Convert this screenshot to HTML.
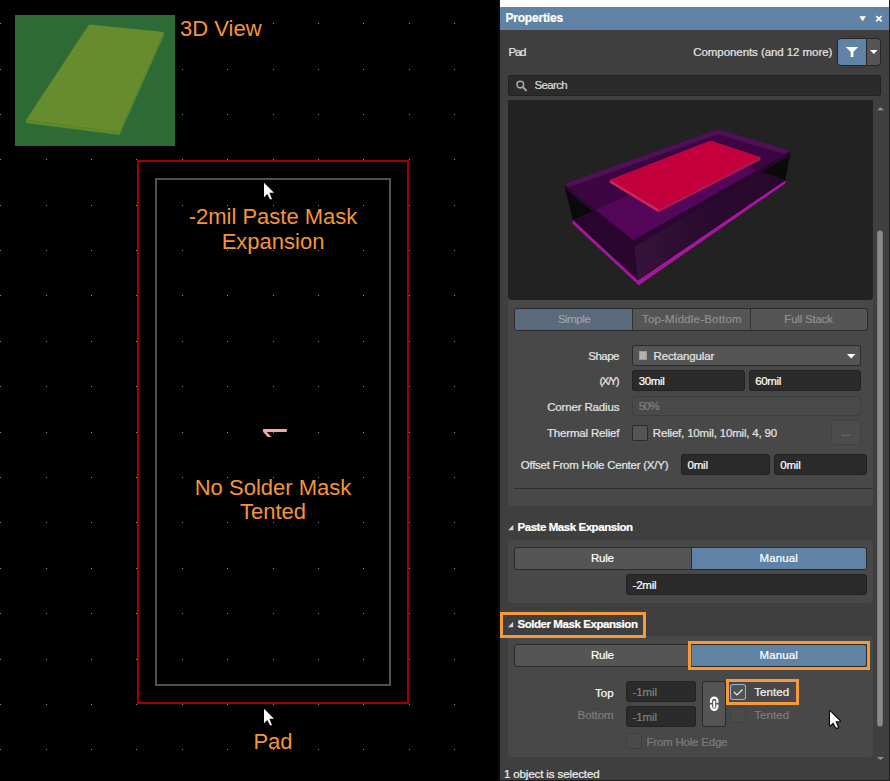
<!DOCTYPE html>
<html><head><meta charset="utf-8"><title>Properties</title>
<style>
html,body{margin:0;padding:0;background:#000;}
body{width:890px;height:781px;position:relative;overflow:hidden;font-family:"Liberation Sans",sans-serif;font-size:11.5px;}
.t{position:absolute;white-space:nowrap;line-height:14px;display:block;-webkit-text-stroke:0.22px}
.b{position:absolute;box-sizing:border-box}
.o{position:absolute;white-space:nowrap;color:#f5953a;font-size:22px;line-height:25px;text-align:center;display:block}
svg{position:absolute;left:0;top:0}
</style></head><body>

<svg width="500" height="781" viewBox="0 0 500 781">
<path d="M0 23h1v1h-1zM0 69h1v1h-1zM0 114h1v1h-1zM0 159h1v1h-1zM0 205h1v1h-1zM0 250h1v1h-1zM0 295h1v1h-1zM0 341h1v1h-1zM0 386h1v1h-1zM0 432h1v1h-1zM0 477h1v1h-1zM0 522h1v1h-1zM0 568h1v1h-1zM0 613h1v1h-1zM0 659h1v1h-1zM0 704h1v1h-1zM0 749h1v1h-1zM46 23h1v1h-1zM46 69h1v1h-1zM46 114h1v1h-1zM46 159h1v1h-1zM46 205h1v1h-1zM46 250h1v1h-1zM46 295h1v1h-1zM46 341h1v1h-1zM46 386h1v1h-1zM46 432h1v1h-1zM46 477h1v1h-1zM46 522h1v1h-1zM46 568h1v1h-1zM46 613h1v1h-1zM46 659h1v1h-1zM46 704h1v1h-1zM46 749h1v1h-1zM91 23h1v1h-1zM91 69h1v1h-1zM91 114h1v1h-1zM91 159h1v1h-1zM91 205h1v1h-1zM91 250h1v1h-1zM91 295h1v1h-1zM91 341h1v1h-1zM91 386h1v1h-1zM91 432h1v1h-1zM91 477h1v1h-1zM91 522h1v1h-1zM91 568h1v1h-1zM91 613h1v1h-1zM91 659h1v1h-1zM91 704h1v1h-1zM91 749h1v1h-1zM136 23h1v1h-1zM136 69h1v1h-1zM136 114h1v1h-1zM136 159h1v1h-1zM136 205h1v1h-1zM136 250h1v1h-1zM136 295h1v1h-1zM136 341h1v1h-1zM136 386h1v1h-1zM136 432h1v1h-1zM136 477h1v1h-1zM136 522h1v1h-1zM136 568h1v1h-1zM136 613h1v1h-1zM136 659h1v1h-1zM136 704h1v1h-1zM136 749h1v1h-1zM182 23h1v1h-1zM182 69h1v1h-1zM182 114h1v1h-1zM182 159h1v1h-1zM182 205h1v1h-1zM182 250h1v1h-1zM182 295h1v1h-1zM182 341h1v1h-1zM182 386h1v1h-1zM182 432h1v1h-1zM182 477h1v1h-1zM182 522h1v1h-1zM182 568h1v1h-1zM182 613h1v1h-1zM182 659h1v1h-1zM182 704h1v1h-1zM182 749h1v1h-1zM227 23h1v1h-1zM227 69h1v1h-1zM227 114h1v1h-1zM227 159h1v1h-1zM227 205h1v1h-1zM227 250h1v1h-1zM227 295h1v1h-1zM227 341h1v1h-1zM227 386h1v1h-1zM227 432h1v1h-1zM227 477h1v1h-1zM227 522h1v1h-1zM227 568h1v1h-1zM227 613h1v1h-1zM227 659h1v1h-1zM227 704h1v1h-1zM227 749h1v1h-1zM273 23h1v1h-1zM273 69h1v1h-1zM273 114h1v1h-1zM273 159h1v1h-1zM273 205h1v1h-1zM273 250h1v1h-1zM273 295h1v1h-1zM273 341h1v1h-1zM273 386h1v1h-1zM273 432h1v1h-1zM273 477h1v1h-1zM273 522h1v1h-1zM273 568h1v1h-1zM273 613h1v1h-1zM273 659h1v1h-1zM273 704h1v1h-1zM273 749h1v1h-1zM318 23h1v1h-1zM318 69h1v1h-1zM318 114h1v1h-1zM318 159h1v1h-1zM318 205h1v1h-1zM318 250h1v1h-1zM318 295h1v1h-1zM318 341h1v1h-1zM318 386h1v1h-1zM318 432h1v1h-1zM318 477h1v1h-1zM318 522h1v1h-1zM318 568h1v1h-1zM318 613h1v1h-1zM318 659h1v1h-1zM318 704h1v1h-1zM318 749h1v1h-1zM363 23h1v1h-1zM363 69h1v1h-1zM363 114h1v1h-1zM363 159h1v1h-1zM363 205h1v1h-1zM363 250h1v1h-1zM363 295h1v1h-1zM363 341h1v1h-1zM363 386h1v1h-1zM363 432h1v1h-1zM363 477h1v1h-1zM363 522h1v1h-1zM363 568h1v1h-1zM363 613h1v1h-1zM363 659h1v1h-1zM363 704h1v1h-1zM363 749h1v1h-1zM409 23h1v1h-1zM409 69h1v1h-1zM409 114h1v1h-1zM409 159h1v1h-1zM409 205h1v1h-1zM409 250h1v1h-1zM409 295h1v1h-1zM409 341h1v1h-1zM409 386h1v1h-1zM409 432h1v1h-1zM409 477h1v1h-1zM409 522h1v1h-1zM409 568h1v1h-1zM409 613h1v1h-1zM409 659h1v1h-1zM409 704h1v1h-1zM409 749h1v1h-1zM454 23h1v1h-1zM454 69h1v1h-1zM454 114h1v1h-1zM454 159h1v1h-1zM454 205h1v1h-1zM454 250h1v1h-1zM454 295h1v1h-1zM454 341h1v1h-1zM454 386h1v1h-1zM454 432h1v1h-1zM454 477h1v1h-1zM454 522h1v1h-1zM454 568h1v1h-1zM454 613h1v1h-1zM454 659h1v1h-1zM454 704h1v1h-1zM454 749h1v1h-1z" fill="#8c8c8c"/>
<rect x="15" y="15" width="160" height="131" fill="#2d6a35"/>
<polygon points="26,120 119.5,132 119.5,135 26,123" fill="#5e8a2c"/>
<polygon points="119.5,132 164,32 164,35 119.5,135" fill="#5e8a2c"/>
<polygon points="89,24.5 164,32 119.5,132 26,120" fill="#678c2d"/>
<rect x="138" y="161" width="270" height="542" fill="none" stroke="#a00000" stroke-width="2"/>
<rect x="156" y="179" width="234" height="506" fill="none" stroke="#505050" stroke-width="2"/>
<path transform="translate(264,182.8)" d="M0 0v14.4l3.3-3.2 2.7 5.2h2l-2.6-6.4h4.6z" fill="#fff"/>
<path transform="translate(264,708.8)" d="M0 0v14.4l3.3-3.2 2.7 5.2h2l-2.6-6.4h4.6z" fill="#fff"/>
</svg>
<span class="o" style="left:180px;top:15.7px;text-align:left">3D View</span>
<span class="o" style="left:73px;width:400px;top:203.7px">-2mil Paste Mask<br>Expansion</span>
<span class="o" style="left:73px;width:400px;top:476px;line-height:24px">No Solder Mask<br>Tented</span>
<span class="o" style="left:73px;width:400px;top:729px">Pad</span>
<span class="t" style="left:264.9px;top:410.6px;font-size:43px;line-height:40px;color:#f4a6ae;transform:rotate(-90deg) scaleX(0.75);transform-origin:50% 50%;clip-path:inset(0 0 10.2px 0);-webkit-text-stroke:0">1</span>
<div class="b" style="left:498px;top:0px;width:2px;height:781px;background:#0c0c0c;"></div>
<div class="b" style="left:500px;top:0px;width:390px;height:781px;background:#3f3f3f;"></div>
<div class="b" style="left:500px;top:0px;width:389px;height:7px;background:#ffffff;"></div>
<div class="b" style="left:500px;top:7px;width:389px;height:23px;background:#5f82a5;"></div>
<div class="b" style="left:889px;top:0px;width:1px;height:781px;background:#1e1e1e;"></div>
<div class="b" style="left:500px;top:780px;width:390px;height:1px;background:#1e1e1e;"></div>
<span class="t" style="left:505.40px;top:10.99px;font-size:12px;letter-spacing:-0.184px;color:#ffffff;font-weight:bold;">Properties</span>
<svg width="890" height="781" viewBox="0 0 890 781" style="pointer-events:none"><path d="M859.3 16.2h6.6l-3.3 5z" fill="#fff"/><path d="M876.2 16l5.4 5.4M881.6 16l-5.4 5.4" stroke="#fff" stroke-width="1.7" fill="none"/></svg>
<span class="t" style="left:508.50px;top:45.07px;font-size:11.5px;letter-spacing:-1.231px;color:#e4e4e4;">Pad</span>
<span class="t" style="left:693.30px;top:45.07px;font-size:11.5px;letter-spacing:-0.070px;color:#e4e4e4;">Components (and 12 more)</span>
<div class="b" style="left:837px;top:38px;width:44px;height:28px;background:#555555;box-shadow:inset 0 0 0 1px #262626;border-radius:4px;"></div>
<div class="b" style="left:838px;top:39px;width:28px;height:26px;background:#5f82a5;border-radius:3px 0 0 3px;"></div>
<div class="b" style="left:866px;top:39px;width:1px;height:26px;background:#262626;"></div>
<svg width="890" height="781" viewBox="0 0 890 781"><path d="M845.8 46.9h12.3l-4.7 5.2v5h-2.7v-5z" fill="#fff"/><path d="M870 50h7.6l-3.8 4z" fill="#fff"/></svg>
<div class="b" style="left:508px;top:75px;width:373px;height:21px;background:#2b2b2b;box-shadow:inset 0 0 0 1px #222222;border-radius:3px;"></div>
<svg width="890" height="781" viewBox="0 0 890 781"><circle cx="520.3" cy="84.6" r="3.3" fill="none" stroke="#a6a6a6" stroke-width="1.6"/><path d="M522.7 87l3.4 3.4" stroke="#a6a6a6" stroke-width="2" stroke-linecap="round"/></svg>
<span class="t" style="left:534.60px;top:77.67px;font-size:11.5px;letter-spacing:-0.687px;color:#dcdcdc;">Search</span>
<div class="b" style="left:508px;top:100px;width:365px;height:200px;background:#222222;border-radius:0 0 4px 4px;"></div>
<svg width="890" height="781" viewBox="0 0 890 781"><defs><clipPath id="cf"><polygon points="572.9,219.8 717.0,156.0 785.2,180.2 638.0,280.3"/></clipPath><linearGradient id="rg" x1="634" y1="0" x2="790" y2="0" gradientUnits="userSpaceOnUse"><stop offset="0" stop-color="#36133b"/><stop offset="0.45" stop-color="#2a0a2f"/><stop offset="1" stop-color="#29082d"/></linearGradient></defs><polygon points="572.9,219.8 638.0,280.3 785.2,180.2 785.2,183.6 638.8,285.3 572.3,223.4" fill="#a5169f"/><polygon points="564.0,183.9 633.2,240.2 791.2,150.8 790.1,155.1 634.2,246.8 565.0,188.4" fill="#2c0632"/><polygon points="565.0,188.4 634.2,246.8 638.0,280.3 572.9,219.8" fill="#0a0a0a"/><polygon points="565.0,188.4 634.2,246.8 638.0,280.3 572.9,219.8" fill="#2a062e" clip-path="url(#cf)"/><polygon points="634.2,246.8 790.1,155.1 785.2,180.2 638.0,280.3" fill="#0a0a0a"/><polygon points="634.2,246.8 790.1,155.1 785.2,180.2 638.0,280.3" fill="url(#rg)" clip-path="url(#cf)"/><polygon points="564.0,183.9 718.2,128.9 791.2,150.8 633.2,240.2" fill="#3d0643"/><polygon points="564.0,183.9 718.2,128.9 791.2,150.8 633.2,240.2" fill="#540658" clip-path="url(#cf)"/><polygon points="564.0,183.9 718.2,128.9 791.2,150.8 784.5,154.0 718.2,134.2 568.5,187.3" fill="#4e1254"/><polygon points="609.9,180.1 710.4,140.8 760.4,157.2 658.6,209.2 658.6,212.2 609.9,182.8" fill="#cc2a5e"/><polygon points="658.6,209.2 760.4,157.2 760.4,160 658.6,212.2" fill="#b3164c"/><polygon points="609.9,180.1 710.4,140.8 760.4,157.2 658.6,209.2" fill="#c3003b"/></svg>
<svg width="890" height="781" viewBox="0 0 890 781"><path d="M877 110.2h7l-3.5-3z" fill="#939393"/><path d="M877 757h7l-3.5 3z" fill="#939393"/><rect x="877.2" y="230.5" width="5.6" height="496" rx="2.8" fill="#8a8a8a"/></svg>
<div class="b" style="left:508px;top:300px;width:365px;height:206px;background:#484848;border-radius:0 0 4px 4px;"></div>
<div class="b" style="left:514px;top:308px;width:354px;height:23px;background:#555555;box-shadow:inset 0 0 0 1px #2a2a2a;border-radius:3px;"></div>
<div class="b" style="left:515px;top:309px;width:117px;height:21px;background:#5a6a7b;border-radius:2px 0 0 2px;"></div>
<div class="b" style="left:632px;top:309px;width:1px;height:21px;background:#333333;"></div>
<div class="b" style="left:750px;top:309px;width:1px;height:21px;background:#333333;"></div>
<span class="t" style="left:558.00px;top:311.67px;font-size:11.5px;letter-spacing:-0.510px;color:#9aa1a9;">Simple</span>
<span class="t" style="left:641.95px;top:311.67px;font-size:11.5px;letter-spacing:0.200px;color:#8f8f8f;">Top-Middle-Bottom</span>
<span class="t" style="left:784.35px;top:311.67px;font-size:11.5px;letter-spacing:-0.221px;color:#8f8f8f;">Full Stack</span>
<span class="t" style="left:588.30px;top:348.67px;font-size:11.5px;letter-spacing:-0.513px;color:#e4e4e4;">Shape</span>
<div class="b" style="left:632px;top:345px;width:229px;height:21px;background:#555555;box-shadow:inset 0 0 0 1px #2a2a2a;border-radius:3px;"></div>
<div class="b" style="left:638.6px;top:351.2px;width:8.600000000000023px;height:9.0px;background:#b2b2b2;box-shadow:inset 0 0 0 1px #9c9c9c;"></div>
<span class="t" style="left:653.50px;top:348.67px;font-size:11.5px;letter-spacing:-0.120px;color:#e4e4e4;">Rectangular</span>
<svg width="890" height="781" viewBox="0 0 890 781"><path d="M847 354h8.4l-4.2 4.4z" fill="#fff"/></svg>
<span class="t" style="left:599.50px;top:373.67px;font-size:11.5px;letter-spacing:-1.549px;color:#e4e4e4;">(X/Y)</span>
<div class="b" style="left:632px;top:370px;width:113px;height:21px;background:#2b2b2b;box-shadow:inset 0 0 0 1px #222222;border-radius:4px;"></div>
<div class="b" style="left:749px;top:370px;width:112px;height:21px;background:#2b2b2b;box-shadow:inset 0 0 0 1px #222222;border-radius:4px;"></div>
<span class="t" style="left:638.70px;top:373.67px;font-size:11.5px;letter-spacing:-0.370px;color:#ffffff;">30mil</span>
<span class="t" style="left:755.20px;top:373.67px;font-size:11.5px;letter-spacing:-0.370px;color:#ffffff;">60mil</span>
<span class="t" style="left:547.20px;top:399.97px;font-size:11.5px;letter-spacing:-0.153px;color:#e4e4e4;">Corner Radius</span>
<div class="b" style="left:632px;top:396px;width:229px;height:20px;background:#494949;box-shadow:inset 0 0 0 1px #3e3e3e;border-radius:3px;"></div>
<span class="t" style="left:638.70px;top:398.67px;font-size:11.5px;letter-spacing:-1.008px;color:#808080;">50%</span>
<span class="t" style="left:547.00px;top:425.97px;font-size:11.5px;letter-spacing:-0.174px;color:#e4e4e4;">Thermal Relief</span>
<div class="b" style="left:632px;top:425px;width:16px;height:16px;background:#555555;box-shadow:inset 0 0 0 1px #2a2a2a;border-radius:2px;"></div>
<span class="t" style="left:652.80px;top:425.97px;font-size:11.5px;letter-spacing:-0.181px;color:#e4e4e4;">Relief, 10mil, 10mil, 4, 90</span>
<div class="b" style="left:831px;top:420px;width:30px;height:25px;background:#4c4c4c;box-shadow:inset 0 0 0 1px #424242;border-radius:3px;"></div>
<span class="t" style="left:841.55px;top:424.97px;font-size:11.5px;letter-spacing:-0.042px;color:#808080;">...</span>
<span class="t" style="left:520.70px;top:457.77px;font-size:11.5px;letter-spacing:-0.237px;color:#e4e4e4;">Offset From Hole Center (X/Y)</span>
<div class="b" style="left:681px;top:454px;width:89px;height:21px;background:#2b2b2b;box-shadow:inset 0 0 0 1px #222222;border-radius:4px;"></div>
<div class="b" style="left:774px;top:454px;width:93px;height:21px;background:#2b2b2b;box-shadow:inset 0 0 0 1px #222222;border-radius:4px;"></div>
<span class="t" style="left:687.50px;top:457.77px;font-size:11.5px;letter-spacing:-0.195px;color:#ffffff;">0mil</span>
<span class="t" style="left:780.20px;top:457.77px;font-size:11.5px;letter-spacing:-0.195px;color:#ffffff;">0mil</span>
<div class="b" style="left:514px;top:488px;width:359px;height:1px;background:#2e2e2e;"></div>
<svg width="890" height="781" viewBox="0 0 890 781"><path d="M513.4 524.8v5.5h-5.3z" fill="#d4d4d4"/></svg>
<span class="t" style="left:517.50px;top:520.07px;font-size:11.5px;letter-spacing:-0.447px;color:#ffffff;font-weight:bold;">Paste Mask Expansion</span>
<div class="b" style="left:508px;top:540px;width:365px;height:63px;background:#484848;border-radius:4px;"></div>
<div class="b" style="left:514px;top:547px;width:353px;height:23px;background:#555555;box-shadow:inset 0 0 0 1px #2a2a2a;border-radius:3px;"></div>
<div class="b" style="left:692px;top:548px;width:174px;height:21px;background:#5f82a5;border-radius:0 2px 2px 0;"></div>
<div class="b" style="left:691px;top:548px;width:1px;height:21px;background:#2a2a2a;"></div>
<span class="t" style="left:591.00px;top:551.17px;font-size:11.5px;letter-spacing:-0.217px;color:#ffffff;">Rule</span>
<span class="t" style="left:759.45px;top:551.17px;font-size:11.5px;letter-spacing:0.117px;color:#ffffff;">Manual</span>
<div class="b" style="left:626px;top:574px;width:241px;height:21px;background:#2b2b2b;box-shadow:inset 0 0 0 1px #222222;border-radius:4px;"></div>
<span class="t" style="left:632.60px;top:577.67px;font-size:11.5px;letter-spacing:-0.228px;color:#ffffff;">-2mil</span>
<div class="b" style="left:508px;top:636px;width:365px;height:121px;background:#484848;border-radius:4px;"></div>
<div class="b" style="left:500px;top:612px;width:146px;height:26px;background:#3f3f3f;border:3px solid #f5993a;"></div>
<span class="t" style="left:517.40px;top:617.47px;font-size:11.5px;letter-spacing:-0.429px;color:#ffffff;font-weight:bold;">Solder Mask Expansion</span>
<svg width="890" height="781" viewBox="0 0 890 781"><path d="M513.2 621.8v5.5h-5.3z" fill="#d4d4d4"/></svg>
<div class="b" style="left:514px;top:644px;width:353px;height:23px;background:#555555;box-shadow:inset 0 0 0 1px #2a2a2a;border-radius:3px;"></div>
<div class="b" style="left:692px;top:645px;width:174px;height:21px;background:#5f82a5;border-radius:0 2px 2px 0;"></div>
<div class="b" style="left:688px;top:641px;width:182px;height:29px;background:transparent;border:3px solid #f5993a;"></div>
<span class="t" style="left:591.00px;top:648.17px;font-size:11.5px;letter-spacing:-0.217px;color:#ffffff;">Rule</span>
<span class="t" style="left:759.45px;top:648.17px;font-size:11.5px;letter-spacing:0.117px;color:#ffffff;">Manual</span>
<span class="t" style="left:595.00px;top:685.57px;font-size:11.5px;letter-spacing:0.030px;color:#ffffff;">Top</span>
<span class="t" style="left:577.60px;top:707.57px;font-size:11.5px;letter-spacing:-0.086px;color:#7c7c7c;">Bottom</span>
<div class="b" style="left:626px;top:681px;width:70px;height:21px;background:#2b2b2b;box-shadow:inset 0 0 0 1px #222222;border-radius:4px;"></div>
<div class="b" style="left:626px;top:706px;width:70px;height:21px;background:#2b2b2b;box-shadow:inset 0 0 0 1px #222222;border-radius:4px;"></div>
<span class="t" style="left:632.60px;top:685.17px;font-size:11.5px;letter-spacing:-0.103px;color:#808080;">-1mil</span>
<span class="t" style="left:632.60px;top:710.17px;font-size:11.5px;letter-spacing:-0.103px;color:#808080;">-1mil</span>
<div class="b" style="left:702px;top:681px;width:24px;height:46px;background:#555555;box-shadow:inset 0 0 0 1px #2a2a2a;border-radius:3px;"></div>
<svg width="890" height="781" viewBox="0 0 890 781"><g fill="none" stroke="#fff" stroke-width="2.2"><rect x="711" y="697.6" width="6.4" height="12.2" rx="3.2"/></g><rect x="709" y="702.9" width="11" height="1.6" fill="#555"/><path d="M714.2 700.7v7.1" stroke="#fff" stroke-width="2"/></svg>
<div class="b" style="left:726px;top:679px;width:73px;height:26px;background:transparent;border:3px solid #f5993a;"></div>
<div class="b" style="left:730px;top:684px;width:16px;height:16px;background:#525252;box-shadow:inset 0 0 0 1px #8fb6e0;border-radius:3px;"></div>
<svg width="890" height="781" viewBox="0 0 890 781"><path d="M734 692l3 3 5.5-5.5" fill="none" stroke="#ececec" stroke-width="1.15"/></svg>
<span class="t" style="left:754.20px;top:685.07px;font-size:11.5px;letter-spacing:0.095px;color:#f4f4f4;">Tented</span>
<div class="b" style="left:730px;top:707px;width:16px;height:16px;background:#4a4a4a;box-shadow:inset 0 0 0 1px #404040;border-radius:2px;"></div>
<span class="t" style="left:754.20px;top:707.57px;font-size:11.5px;letter-spacing:0.095px;color:#7c7c7c;">Tented</span>
<div class="b" style="left:626px;top:733px;width:16px;height:16px;background:#4a4a4a;box-shadow:inset 0 0 0 1px #404040;border-radius:2px;"></div>
<span class="t" style="left:646.50px;top:734.87px;font-size:11.5px;letter-spacing:-0.210px;color:#7c7c7c;">From Hole Edge</span>
<span class="t" style="left:503.90px;top:767.17px;font-size:11.5px;letter-spacing:-0.111px;color:#f0f0f0;">1 object is selected</span>
<svg width="890" height="781" viewBox="0 0 890 781"><path transform="translate(830,711.2)" d="M0 0v14.4l3.3-3.2 2.7 5.2h2l-2.6-6.4h4.6z" fill="#fff" stroke="#05050f" stroke-width="2.2" stroke-linejoin="round" paint-order="stroke"/></svg>
</body></html>
